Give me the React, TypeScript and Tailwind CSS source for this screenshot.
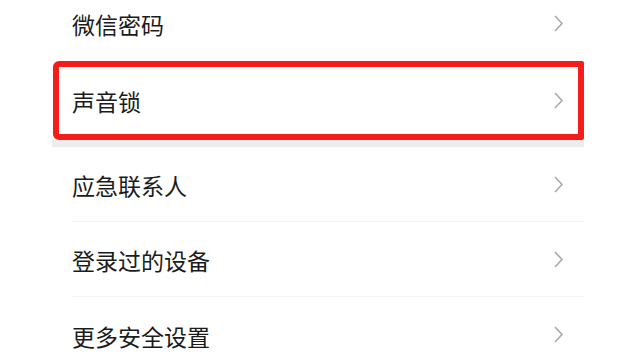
import React from 'react'

const font = { fontFamily: '"Noto Sans CJK SC", "Noto Sans", sans-serif' }

const Chevron = () => (
  <svg width="10" height="17" viewBox="0 0 10 17" fill="none" className="shrink-0">
    <path d="M1.5 1.5 L8 8.5 L1.5 15.5" stroke="#ababab" strokeWidth="1.7" strokeLinecap="round" strokeLinejoin="round" />
  </svg>
)

const Row = ({ label, last = false }: { label: string; last?: boolean }) => (
  <div className="pl-[20px]">
    <div
      className={`h-[75px] pr-[20px] flex items-center justify-between ${last ? '' : 'border-b border-[#f2f2f2]'}`}
    >
      <span className="text-[23px] text-[#1b1b1b] leading-none pt-[3px]">{label}</span>
      <Chevron />
    </div>
  </div>
)

export default function App() {
  return (
    <div className="w-[640px] h-[360px] bg-white overflow-hidden" style={font}>
      <div className="ml-[52px] w-[532px] -mt-[15px] bg-white">
        {/* first group (cut off at the top) */}
        <div className="pl-[20px]">
          <div className="h-[76px] pr-[20px] flex items-center justify-between">
            <span className="text-[23px] text-[#1b1b1b] leading-none pt-[2px]">微信密码</span>
            <Chevron />
          </div>
        </div>

        {/* highlighted row */}
        <div className="ml-[1px] h-[79px] border-[6px] border-[#f51d1a] rounded-l-[6px] rounded-r-[2px] pl-[13px] pr-[14px] flex items-center justify-between">
          <span className="text-[23px] text-[#1b1b1b] leading-none pt-[2px]">声音锁</span>
          <Chevron />
        </div>

        <div className="h-[7px] bg-[#ededed]" />

        <Row label="应急联系人" />
        <Row label="登录过的设备" />
        <Row label="更多安全设置" last />
      </div>
    </div>
  )
}
